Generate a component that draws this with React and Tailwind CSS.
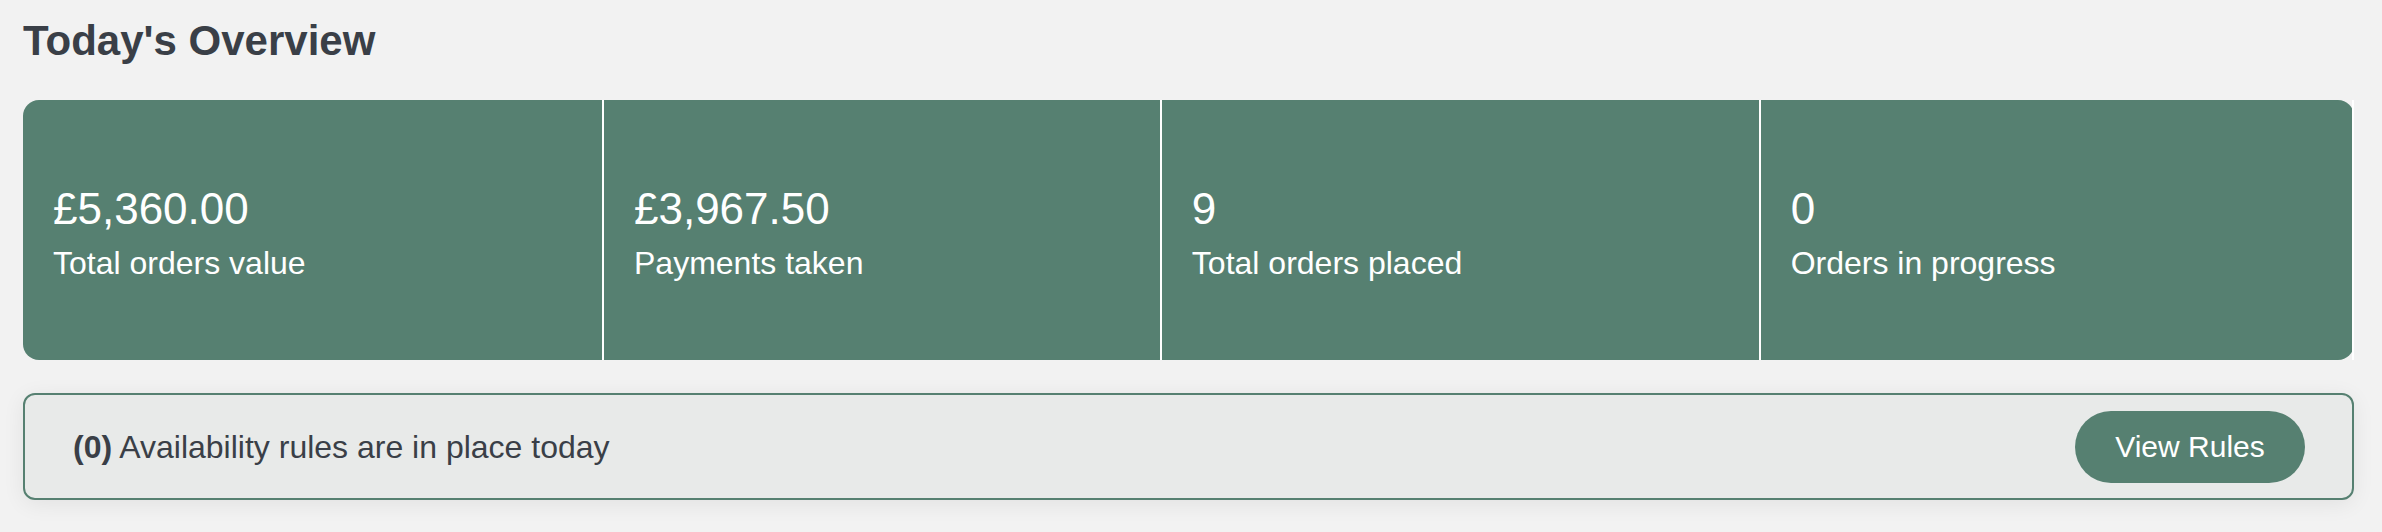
const stats = [
  { value: "£5,360.00", label: "Total orders value" },
  { value: "£3,967.50", label: "Payments taken" },
  { value: "9", label: "Total orders placed" },
  { value: "0", label: "Orders in progress" },
];

function StatCell({ value, label }) {
  return (
    <div className="flex flex-auto flex-col justify-center border-r-2 border-white pl-[30px] pt-[4px]">
      <p className="text-[44px] leading-[52px] text-white">{value}</p>
      <p className="mt-[9px] text-[32px] leading-[38px] text-white">{label}</p>
    </div>
  );
}

export default function App() {
  return (
    <div className="min-h-screen bg-[#f2f2f2] pl-[23px] pr-[28px] pt-[16px] font-['Liberation_Sans',Arial,sans-serif] text-[#3a3f47]">
      <h1 className="text-[42px] font-bold leading-[50px]">Today's Overview</h1>

      <section className="mt-[34px] flex h-[260px] rounded-2xl bg-[#568071]">
        {stats.map((stat) => (
          <StatCell key={stat.label} {...stat} />
        ))}
      </section>

      <div className="mt-[33px] flex h-[107px] items-center justify-between rounded-xl border-2 border-[#568071] bg-[#e8eae9] pl-[48px] pr-[47px] shadow-[0_4px_22px_rgba(0,0,0,0.07)]">
        <p className="text-[32px]">
          <span className="font-bold">(0)</span> Availability rules are in place today
        </p>
        <button
          type="button"
          className="h-[72px] w-[230px] rounded-full bg-[#568071] text-[30px] text-white"
        >
          View Rules
        </button>
      </div>
    </div>
  );
}
